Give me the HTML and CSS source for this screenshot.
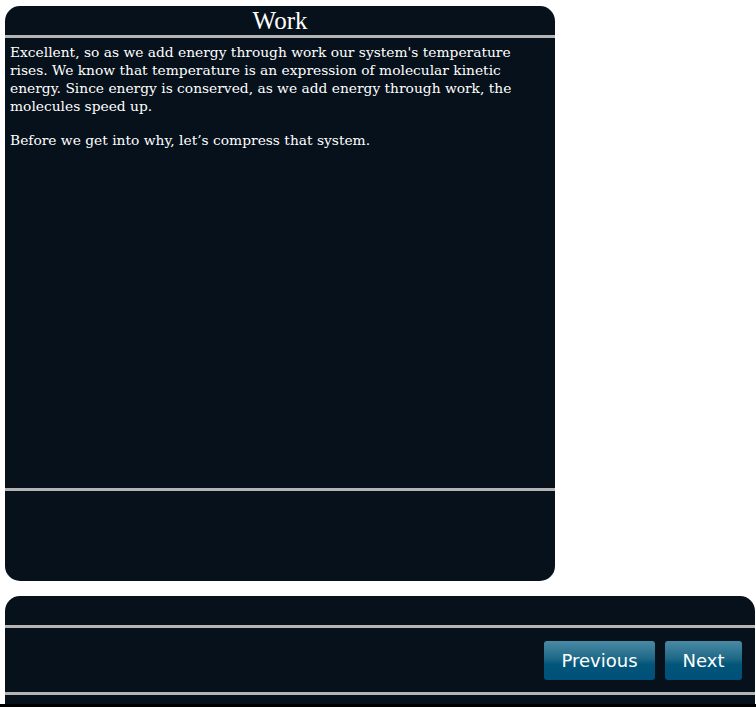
FILE: index.html
```html
<!DOCTYPE html>
<html>
<head>
<meta charset="utf-8">
<link rel="stylesheet" href="styles.css">
</head>
<body>
<div class="page">
  <section class="panel main">
    <header class="panel-head">Work</header>
    <div class="panel-body content">
      <p>Excellent, so as we add energy through work our system's temperature rises. We know that temperature is an expression of molecular kinetic energy. Since energy is conserved, as we add energy through work, the molecules speed up.</p>
      <p>Before we get into why, let’s compress that system.</p>
    </div>
    <div class="panel-foot"></div>
  </section>
  <section class="panel nav">
    <header class="panel-head nav-head"></header>
    <div class="panel-body nav-body">
      <button class="btn">Previous</button>
      <button class="btn">Next</button>
    </div>
    <div class="nav-foot"></div>
  </section>
</div>
<div class="bottom-bar"></div>
</body>
</html>
```
FILE: styles.css
```css
html, body {
  margin: 0;
  padding: 0;
  background: #ffffff;
  overflow: hidden;
}
.page {
  padding: 6px 1px 0 5px;
  display: flex;
  flex-direction: column;
  gap: 15px;
}
.panel {
  background: #06111b;
  color: #ffffff;
  display: flex;
  flex-direction: column;
}
.main {
  width: 550px;
  height: 575px;
  border-radius: 15px;
}
.panel-head {
  height: 29px;
  border-bottom: 3px solid #b4b4b4;
  text-align: center;
  font-family: "Liberation Serif", "Times New Roman", serif;
  font-size: 25px;
  line-height: 30px;
}
.content {
  border-bottom: 3px solid #b4b4b4;
  padding: 5px 5px 0 5px;
  box-sizing: border-box;
  font-family: "DejaVu Serif", Georgia, serif;
  font-size: 13.8px;
  line-height: 18px;
  height: 453px;
}
.content p {
  margin: 0 0 16px 0;
}
.panel-foot {
  flex: 1;
}
.nav {
  width: 750px;
  height: 108px;
  border-radius: 15px 15px 0 0;
}
.nav-body {
  border-bottom: 3px solid #b4b4b4;
  display: flex;
  justify-content: flex-end;
  align-items: flex-start;
  gap: 10px;
  padding: 13px 13px 0 0;
  box-sizing: border-box;
  height: 67px;
}
.btn {
  height: 39px;
  padding: 0 17.5px;
  border: none;
  border-radius: 3px;
  background: linear-gradient(to bottom, #4a8aa4 0%, #1e6987 45%, #02557a 60%, #00507a 100%);
  color: #ffffff;
  font-family: "DejaVu Sans", Verdana, sans-serif;
  font-size: 18px;
  line-height: 39px;
}
.nav-foot {
  height: 9px;
}
.bottom-bar {
  position: absolute;
  left: 0;
  top: 704px;
  width: 756px;
  height: 3px;
  background: #000000;
}
```
